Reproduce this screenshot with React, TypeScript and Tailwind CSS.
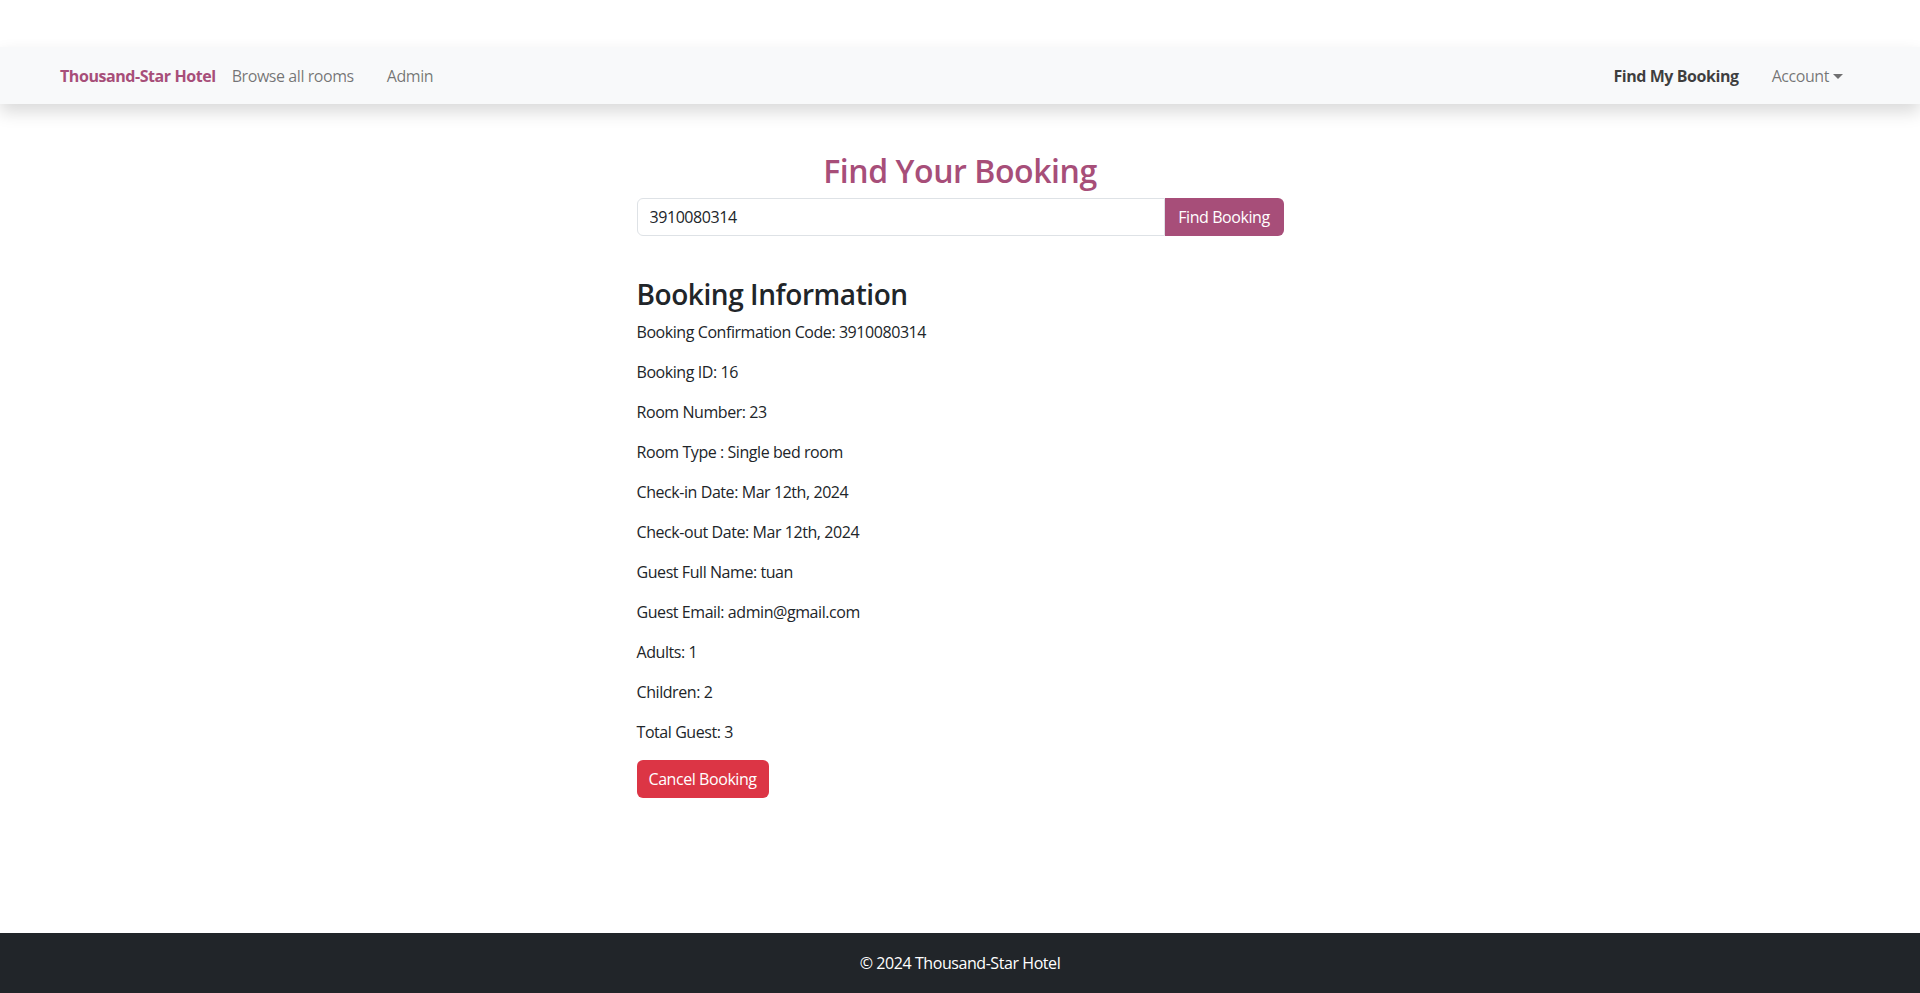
const bookingDetails: { label: string; value: string }[] = [
  { label: "Booking Confirmation Code", value: "3910080314" },
  { label: "Booking ID", value: "16" },
  { label: "Room Number", value: "23" },
  { label: "Room Type ", value: "Single bed room" },
  { label: "Check-in Date", value: "Mar 12th, 2024" },
  { label: "Check-out Date", value: "Mar 12th, 2024" },
  { label: "Guest Full Name", value: "tuan" },
  { label: "Guest Email", value: "admin@gmail.com" },
  { label: "Adults", value: "1" },
  { label: "Children", value: "2" },
  { label: "Total Guest", value: "3" },
];

function NavBar() {
  return (
    <nav className="mt-[47px] flex h-[57px] items-center justify-between bg-[#f8f9fa] pl-[60px] pr-[77px] text-base shadow-[0_8px_16px_rgba(0,0,0,0.15)]">
      <div className="flex items-center">
        <span className="font-bold text-[#a74e79]">Thousand-Star Hotel</span>
        <span className="ml-4 text-[rgba(0,0,0,0.55)]">Browse all rooms</span>
        <span className="ml-[33px] text-[rgba(0,0,0,0.55)]">Admin</span>
      </div>
      <div className="flex items-center">
        <span className="font-bold text-[rgba(0,0,0,0.75)]">Find My Booking</span>
        <span className="ml-[33px] flex items-center text-[rgba(0,0,0,0.55)]">
          Account
          <span className="ml-[4px] mt-[2px] inline-block h-0 w-0 border-x-[5px] border-t-[5px] border-x-transparent border-t-[rgba(0,0,0,0.55)]" />
        </span>
      </div>
    </nav>
  );
}

export default function App() {
  return (
    <div className="flex min-h-screen flex-col bg-white font-['Segoe_UI','Open_Sans',sans-serif] text-base tracking-[-0.027em] text-[#212529]">
      <NavBar />
      <main className="flex flex-1 justify-center pt-[48px]">
        <div className="w-[647px]">
          <h2 className="mb-2 text-center text-[32px] leading-[1.2] font-semibold text-[#a74e79]">
            Find Your Booking
          </h2>
          <div className="flex h-[38px]">
            <input
              className="flex-1 rounded-l-md border border-[#dee2e6] px-3 text-base text-[#212529] outline-none"
              defaultValue="3910080314"
            />
            <button className="w-[119px] rounded-r-md bg-[#a74e79] text-base text-white">
              Find Booking
            </button>
          </div>
          <div className="mt-[42px]">
            <h3 className="mb-2 text-[28px] leading-[1.2] font-semibold">Booking Information</h3>
            {bookingDetails.map((d) => (
              <p key={d.label} className="mb-4 leading-6">
                {`${d.label}: ${d.value}`}
              </p>
            ))}
            <button className="h-[38px] rounded-md bg-[#dc3545] px-3 text-white">Cancel Booking</button>
          </div>
        </div>
      </main>
      <footer className="flex h-[60px] items-center justify-center bg-[#212529] text-white">
        © 2024 Thousand-Star Hotel
      </footer>
    </div>
  );
}
